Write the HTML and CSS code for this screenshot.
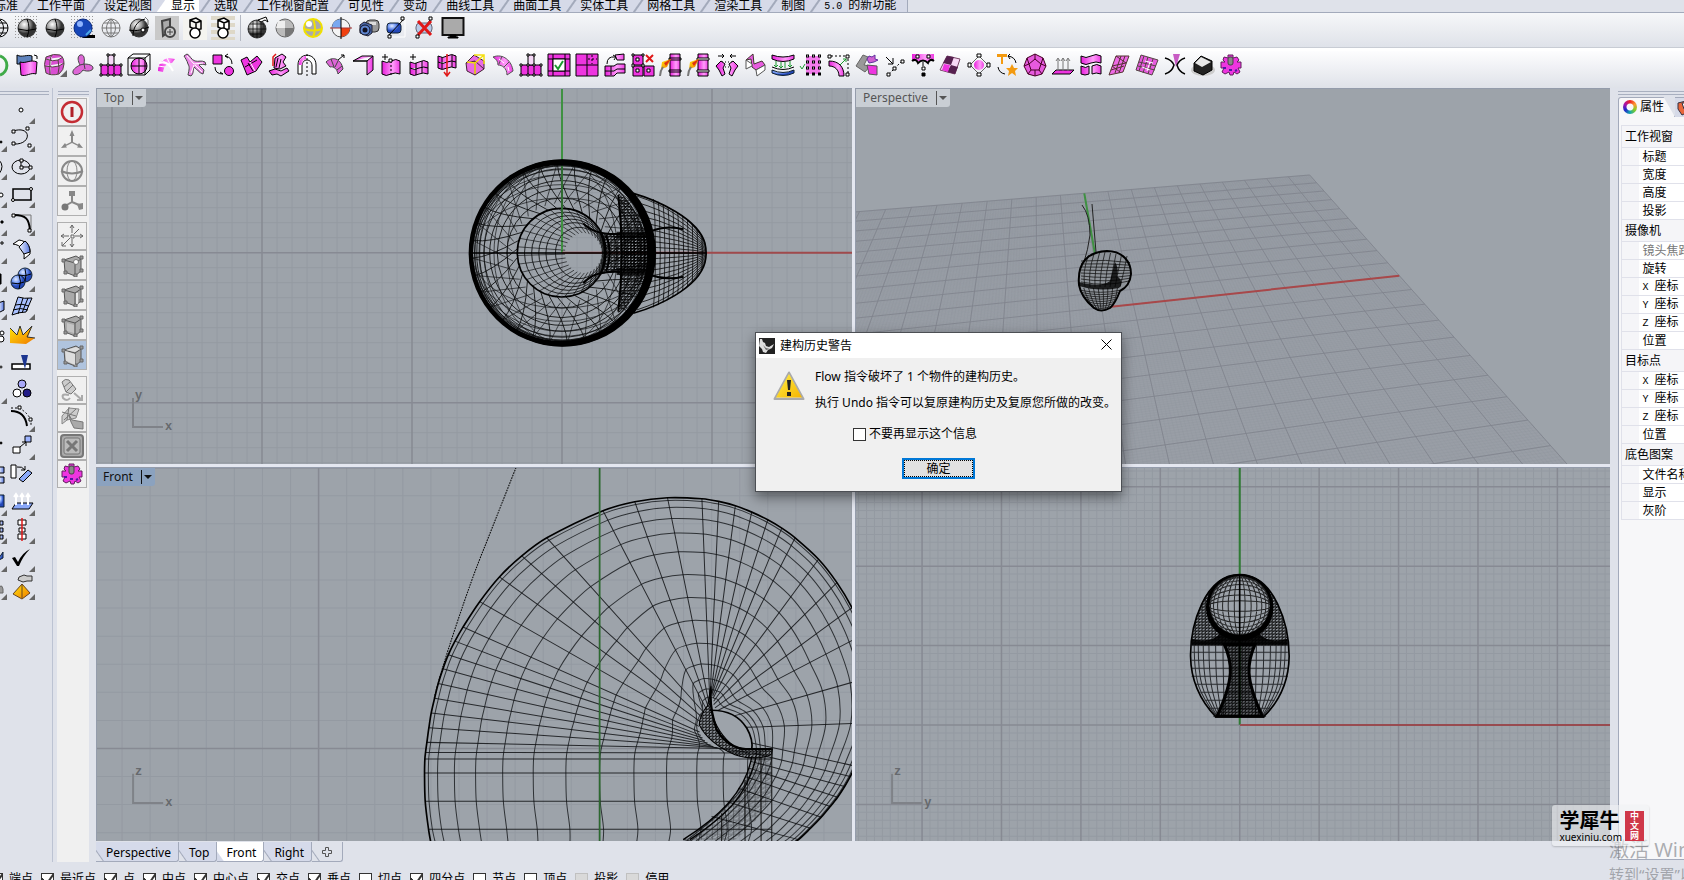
FILE: index.html
```html
<!DOCTYPE html>
<html lang="zh-CN">
<head>
<meta charset="utf-8">
<title>Rhinoceros</title>
<link rel="stylesheet" href="styles.css">
</head>
<body>
<svg class="defs" aria-hidden="true">
  <defs>
    <linearGradient id="pink"><stop offset="0" stop-color="#e81edb"/><stop offset=".6" stop-color="#ff9dfa"/><stop offset="1" stop-color="#ee3ae2"/></linearGradient>
    <radialGradient id="ball" cx=".35" cy=".3"><stop offset="0" stop-color="#fff"/><stop offset=".6" stop-color="#999"/><stop offset="1" stop-color="#333"/></radialGradient>
    <radialGradient id="blue" cx=".35" cy=".3"><stop offset="0" stop-color="#dfeaff"/><stop offset=".6" stop-color="#6a90f0"/><stop offset="1" stop-color="#2448b8"/></radialGradient>
    <linearGradient id="sky"><stop offset="0" stop-color="#f4f8ff"/><stop offset="1" stop-color="#5878e0"/></linearGradient>
    <linearGradient id="gold" x2="1" y2="1"><stop offset="0" stop-color="#ffe60a"/><stop offset="1" stop-color="#f07800"/></linearGradient>
    <linearGradient id="amber" x2="1" y2="1"><stop offset="0" stop-color="#fff04a"/><stop offset="1" stop-color="#f5b400"/></linearGradient>
    <pattern id="dots" width="3" height="3" patternUnits="userSpaceOnUse"><path d="M0 0h1v1h-1z" fill="#999"/></pattern>
    <pattern id="mesh" width="10" height="9" patternUnits="userSpaceOnUse"><path d="M0 2h10M3 0v9M0 9L10 0M7 0v5" stroke="#000" stroke-width="2" fill="none"/></pattern>
    <pattern id="mesh2" width="16" height="14" patternUnits="userSpaceOnUse"><path d="M0 3h16M4 0v14M0 14L16 5" stroke="#000" stroke-width="2" fill="none"/></pattern>
    <clipPath id="tail-clip"><path d="M560 155C620 180 745 235 765 310Q772 339 765 368C745 445 620 500 560 523z"/></clipPath>
  </defs>
</svg>

<nav class="tabs">
  <button class="tab">标准</button><button class="tab">工作平面</button><button class="tab">设定视图</button><button class="tab on">显示</button><button class="tab">选取</button><button class="tab">工作视窗配置</button><button class="tab">可见性</button><button class="tab">变动</button><button class="tab">曲线工具</button><button class="tab">曲面工具</button><button class="tab">实体工具</button><button class="tab">网格工具</button><button class="tab">渲染工具</button><button class="tab">制图</button><button class="tab last"><span class="mono">5.0&nbsp;</span>的新功能</button>
</nav>
<div class="bar bar-display" id="display-bar"></div>
<div class="bar bar-deform" id="deform-bar"></div>

<main class="work">
  <aside class="tools">
    <div class="grip"></div>
    <div class="tool-grid" id="tool-grid"></div>
  </aside>
  <aside class="filters">
    <div class="grip"></div>
    <div class="filter-list" id="filter-list"></div>
  </aside>

  <section class="views">
    <div class="view-grid">
      <div class="view">
        <svg id="view-top" viewBox="97 89 755 376" preserveAspectRatio="xMinYMin slice"></svg>
        <button class="view-name">Top<span class="drop"></span></button>
      </div>
      <div class="view">
        <svg id="view-persp" viewBox="856 89 754 376" preserveAspectRatio="xMinYMin slice"></svg>
        <button class="view-name">Perspective<span class="drop"></span></button>
      </div>
      <div class="view">
        <svg id="view-front" viewBox="97 469 755 372" preserveAspectRatio="xMinYMin slice"></svg>
        <button class="view-name active">Front<span class="drop"></span></button>
      </div>
      <div class="view">
        <svg id="view-right" viewBox="856 469 754 372" preserveAspectRatio="xMinYMin slice"></svg>
      </div>
    </div>
    <nav class="view-tabs">
      <button class="vtab first">Perspective</button><button class="vtab">Top</button><button class="vtab on">Front</button><button class="vtab">Right</button><button class="vtab add" aria-label="+"><svg class="i" width="10" height="10" viewBox="0 0 10 10"><path d="M3.500 .5h3v3h3v3h-3v3h-3v-3h-3v-3h3z" stroke="#555"/></svg></button>
    </nav>
  </section>

  <aside class="props">
    <div class="grip"></div>
    <div class="prop-tabs">
      <button class="ptab"><span class="wheel"></span>属性</button>
      <button class="ptab2"><svg class="i" width="16" height="16" viewBox="0 0 16 16"><path d="M1 3l8-2v12l-4 2-4-6z" fill="#e8663a" stroke="#334"/><path d="M5 3h8v6H7z" fill="#fff" stroke="#334"/></svg></button>
    </div>
    <div class="prop-body">
      <table class="ptable">
        <colgroup><col class="indent"><col></colgroup>
        <tbody>
          <tr class="head"><th colspan="2">工作视窗</th></tr>
          <tr><td></td><td>标题</td></tr>
          <tr><td></td><td>宽度</td></tr>
          <tr><td></td><td>高度</td></tr>
          <tr><td></td><td>投影</td></tr>
          <tr class="head"><th colspan="2">摄像机</th></tr>
          <tr class="off"><td></td><td>镜头焦距</td></tr>
          <tr><td></td><td>旋转</td></tr>
          <tr><td></td><td><span class="mono">X&nbsp;</span>座标</td></tr>
          <tr><td></td><td><span class="mono">Y&nbsp;</span>座标</td></tr>
          <tr><td></td><td><span class="mono">Z&nbsp;</span>座标</td></tr>
          <tr><td></td><td>位置</td></tr>
          <tr class="head"><th colspan="2">目标点</th></tr>
          <tr><td></td><td><span class="mono">X&nbsp;</span>座标</td></tr>
          <tr><td></td><td><span class="mono">Y&nbsp;</span>座标</td></tr>
          <tr><td></td><td><span class="mono">Z&nbsp;</span>座标</td></tr>
          <tr><td></td><td>位置</td></tr>
          <tr class="head"><th colspan="2">底色图案</th></tr>
          <tr><td></td><td>文件名称</td></tr>
          <tr><td></td><td>显示</td></tr>
          <tr><td></td><td>灰阶</td></tr>
        </tbody>
      </table>
    </div>
  </aside>
</main>

<footer class="snaps">
  <label><input type="checkbox" checked>端点</label><label><input type="checkbox" checked>最近点</label><label><input type="checkbox" checked>点</label><label><input type="checkbox" checked>中点</label><label><input type="checkbox" checked>中心点</label><label><input type="checkbox" checked>交点</label><label><input type="checkbox" checked>垂点</label><label><input type="checkbox">切点</label><label><input type="checkbox" checked>四分点</label><label><input type="checkbox">节点</label><label><input type="checkbox">顶点</label><label><input type="checkbox" disabled>投影</label><label><input type="checkbox" disabled>停用</label>
</footer>

<div class="activate"><p class="act-big">激活 Windows</p><p class="act-small">转到“设置”以激活 Windows。</p></div>
<div class="brand"><div><p class="brand-name">学犀牛</p><p class="brand-url">xuexiniu.com</p></div><p class="brand-tag">中文网</p></div>

<div class="dialog" role="dialog" aria-labelledby="dlg-title">
  <header class="dlg-head">
    <svg width="16" height="16" viewBox="0 0 16 16"><path fill="#222" d="M0 0h16v16H0z"/><path fill="#ddd" d="M1 1h2l1 3 2 1 1 3 3 1 5-3-2 4-4 2-2 3-3-1-1-3-3-3z"/><path fill="#666" d="M4 7l3 3 4 1-4 1z"/></svg>
    <h1 id="dlg-title">建构历史警告</h1>
    <button class="dlg-close" aria-label="关闭"><svg width="11" height="11" viewBox="0 0 11 11"><path d="M.5 .5l10 10M10.500 .5l-10 10" stroke="#000" fill="none"/></svg></button>
  </header>
  <div class="dlg-body">
    <svg width="32" height="30" viewBox="0 0 32 30"><path d="M16 1.500L30.500 28h-29z" fill="#d8d8d0" stroke="#aaa" stroke-width="2" stroke-linejoin="round"/><path d="M16 3L29 26.500H3z" fill="url(#amber)"/><path d="M14 9h4l-1 10h-2zM14 21h4v4h-4z" fill="#222"/></svg>
    <div class="dlg-text"><p>Flow 指令破坏了 1 个物件的建构历史。</p><p>执行 Undo 指令可以复原建构历史及复原您所做的改变。</p></div>
  </div>
  <label class="dlg-check"><input type="checkbox">不要再显示这个信息</label>
  <button class="dlg-ok">确定</button>
</div>
<script src="app.js"></script>
</body>
</html>
```
FILE: styles.css
```css
* { box-sizing: border-box; }
body { margin: 0; height: 100vh; overflow: hidden; display: flex; flex-direction: column; position: relative; background: #dfe2ea; color: #000; font: 12px/16px "Noto Sans", "Noto Sans CJK SC", sans-serif; }
button { font: inherit; color: inherit; border: 0; padding: 0; margin: 0; background: none; display: block; }
p, h1 { margin: 0; font-weight: 400; font-size: 12px; }
.defs { position: absolute; width: 0; height: 0; }
.mono { font-family: "Liberation Mono", monospace; font-size: 10px; }

.i { fill: none; stroke: #000; display: block; }
.i .m { fill: url(#pink); }
.i .p { fill: #ee35e0; }
.i .l { fill: #f5d8f6; }
.i .w { fill: #fff; }
.i .k { fill: #000; }
.i .e { fill: #999; stroke: #666; }
.i .g { stroke: #777; }
.i .s { fill: url(#ball); stroke: #333; }
.i .b { fill: url(#blue); stroke: #123; }
.i .y { fill: url(#sky); }
.i .o { fill: url(#gold); }
.i .r { stroke: #e01818; }
.i .n { stroke: none; }
.i .h { stroke: #fff; }
.i .t { stroke-width: 2; }
.i .a { stroke: #1c9a30; }

.tabs { display: flex; flex: none; height: 13px; overflow: hidden; border-bottom: 1px solid #a3aabb; }
.tab { position: relative; flex: none; white-space: nowrap; height: 12px; line-height: 8px; padding: 0 4px 0 15px; background: linear-gradient(125deg, #d6dae8 7px, #a3aabb 8px, #a3aabb 9px, #d6dae8 10px); }
.tab:first-child { margin-left: -21px; }
.tab.on { background: linear-gradient(125deg, #d6dae8 7px, #fff 8px); }
.tab.last { padding-right: 11px; border-right: 1px solid #a3aabb; }
.bar { display: flex; flex: none; align-items: center; background: linear-gradient(#f6f7f9, #dfe2e9); }
.bar-display { height: 35px; padding-bottom: 4px; border-bottom: 1px solid #c8ccd4; }
.bar-deform { height: 40px; padding-bottom: 9px; border-top: 3px solid #fff; background: linear-gradient(#fdfdfe, #dfe2e9); }
.bar button { width: 28px; height: 28px; flex: none; padding: 2px; }
.bar button:first-child { margin-left: -15px; }
.bar .sep { width: 6px; height: 26px; flex: none; background: linear-gradient(#b4b8c2, #b4b8c2) center / 1px 100% no-repeat; }

.work { flex: 1; min-height: 0; display: flex; }
.grip { height: 4px; margin: 3px 0 2px; flex: none; border-top: 1px solid #a9b0c0; border-bottom: 1px solid #a9b0c0; }
.tools { width: 53px; flex: none; border-right: 1px solid #bcc3d2; overflow: hidden; }
.tools .grip { margin-right: 3px; }
.tool-grid { display: grid; grid-template-columns: 28px 28px; grid-auto-rows: 28px; margin-left: -21px; }
.tool { position: relative; }
.tool.fly::after { content: ""; position: absolute; right: 0; bottom: 1px; border: 3px solid; border-color: transparent #666 #666 transparent; }
.filters { width: 43px; flex: none; padding: 0 7px 0 4px; display: flex; flex-direction: column; }
.filters .grip { margin-left: 1px; }
.filter-list { flex: 1; padding-top: 1px; background: #f0f0f0; }
.filter { width: 30px; height: 30px; border: 1px solid #b0b0b0; background: #f0f0f0; display: grid; place-items: center; }
.filter.short { height: 28px; }
.filter.gap { margin-top: 6px; }
.filter.on { background: #b0c4de; }

.views { flex: 1; min-width: 0; display: flex; flex-direction: column; }
.view-grid { flex: 1; min-height: 0; display: grid; grid-template-columns: 756fr 755fr; grid-template-rows: 376fr 374fr; gap: 3px; background: #e4e7f0; }
.view { position: relative; min-width: 0; min-height: 0; background: #9da3aa; border-left: 1px solid #949cab; border-top: 1px solid #949cab; overflow: hidden; }
.view > svg { display: block; width: 100%; height: 100%; position: absolute; }
.view text { font: bold 12px "Liberation Mono", monospace; fill: #66696d; }
.view-name { position: relative; display: flex; align-items: center; height: 18px; padding: 0 3px 1px 7px; gap: 8px; background: #c9ced4; color: #555; border-bottom-right-radius: 3px; }
.view-name.active { background: #8ba2bf; color: #111; padding-left: 6px; }
.drop { display: flex; align-items: center; height: 14px; border-left: 1px solid currentColor; padding-left: 2px; }
.drop::before { content: ""; border: 4px solid transparent; border-top-color: currentColor; border-bottom-width: 0; }
.view-tabs { display: flex; height: 21px; flex: none; padding-top: 1px; }
.vtab { position: relative; height: 20px; padding: 2px 7px 0 10px; background: linear-gradient(55deg, #dfe2ea 5px, #a3aabb 6px, #d5daea 7px); border-right: 1px solid #a3aabb; border-bottom: 1px solid #a3aabb; border-bottom-right-radius: 3px; }
.vtab.on { background: linear-gradient(55deg, #d5daea 5px, #fff 6px); padding-left: 9px; }
.vtab.add { background: linear-gradient(55deg, #dfe2ea 5px, #a3aabb 6px, #dfe2ea 7px); padding: 0 10px; }

.props { width: 74px; flex: none; padding-left: 8px; display: flex; flex-direction: column; overflow: hidden; }
.prop-tabs { display: flex; height: 20px; flex: none; }
.ptab { flex: none; display: flex; align-items: center; gap: 3px; width: 57px; padding: 0 0 1px 4px; border: 1px solid #a3aabb; border-bottom: 0; border-radius: 3px 0 0 0; background: #f7f7f9; clip-path: polygon(0 0, 80% 0, 100% 100%, 0 100%); }
.ptab2 { flex: 1; overflow: hidden; border-top: 1px solid #a3aabb; background: #d6dae8; padding-left: 2px; }
.wheel { flex: none; width: 14px; height: 14px; border-radius: 50%; background: radial-gradient(circle, #f7f7f9 3px, transparent 4px), conic-gradient(#e22, #f93, #8c2, #1aa, #22c, #a1a, #e22); }
.prop-body { flex: 1; margin-bottom: 2px; padding: 8px 0 0 2px; background: #f7f7f9; border-left: 1px solid #a3aabb; border-bottom: 1px solid #a3aabb; overflow: hidden; }
.ptable { width: 120px; border-collapse: collapse; table-layout: fixed; line-height: 14px; white-space: nowrap; border-left: 1px solid #e0e1ea; }
.ptable .indent { width: 17px; }
.ptable td, .ptable th { height: 18px; padding: 0 0 0 4px; border-top: 1px solid #e0e1ea; border-bottom: 1px solid #e0e1ea; text-align: left; font-weight: 400; background: #fff; }
.ptable td:first-child { background: #f5f5f8; }
.ptable th { height: 22px; padding-left: 3px; background: #f5f5f8; }
.ptable .off { color: #777; }

.snaps { flex: none; height: 18px; padding: 10px 0 0; overflow: hidden; display: flex; gap: 8px; }
.snaps label { flex: none; display: flex; gap: 6px; height: 16px; line-height: 14px; white-space: nowrap; }
.snaps label:first-child { margin-left: -10px; }
input[type="checkbox"] { appearance: none; flex: none; width: 13px; height: 13px; margin: 1px 0 0; border: 1px solid #333; background: #fff; }
input[type="checkbox"]:checked { background: linear-gradient(125deg, transparent 8px, #333 9px, #333 10px, transparent 11px), linear-gradient(45deg, #fff 4px, #333 4px, #333 5px, #fff 5px) 0 0 / 5px 100% no-repeat, #fff; }
input[type="checkbox"]:disabled { border-color: #c0c0c0; background: #d9d9d9; }

.activate { position: absolute; left: calc(100% - 75px); bottom: -4px; white-space: nowrap; color: rgba(120, 122, 128, .6); }
.act-big { font-size: 20px; line-height: 28px; }
.act-small { font-size: 15px; line-height: 20px; }
.brand { position: absolute; right: 35px; bottom: 34px; display: flex; gap: 3px; padding: 5px 5px 3px 7px; border-radius: 3px; background: rgba(240, 241, 243, .6); box-shadow: 0 1px 2px rgba(0, 0, 0, .2); }
.brand-name { font-size: 20px; line-height: 22px; font-weight: 700; }
.brand-url { font-size: 10px; line-height: 11px; }
.brand-tag { width: 19px; margin-top: 1px; padding: 0 5px; background: #cf3849; color: #fff; font-size: 9px; line-height: 10px; font-weight: 700; align-self: start; }

.dialog { position: absolute; left: calc(50% - 87px); top: 332px; width: 367px; padding-bottom: 12px; border: 1px solid #4c4f54; background: #f0f0f0; box-shadow: 0 5px 12px rgba(0, 0, 0, .45); }
.dlg-head { display: flex; align-items: center; gap: 5px; height: 25px; padding: 0 9px 0 3px; background: #fff; }
.dlg-head h1 { flex: 1; }
.dlg-body { display: flex; gap: 10px; padding: 11px 12px 0 17px; }
.dlg-body svg { margin-top: 2px; flex: none; }
.dlg-text p { line-height: 16px; margin-bottom: 10px; white-space: nowrap; }
.dlg-check { display: flex; align-items: center; gap: 3px; margin: 5px 0 0 97px; line-height: 16px; }
.dlg-check input { margin: 0; }
.dlg-ok { width: 73px; height: 21px; margin: 16px 0 0 146px; border: 2px solid #0078d7; background: #e1e1e1; outline: 1px dotted #000; outline-offset: -3px; }
```
FILE: app.js
```js
const DISPLAY = [
  '<circle cx="12" cy="12" r="9"/><path d="M3 12h18M12 3v18M12 3c-6 5-6 13 0 18M12 3c6 5 6 13 0 18M5 7h14M5 17h14"/>',
  '<path class="n" d="M0 0h24v24H0z" fill="url(#dots)"/><circle class="s" cx="12" cy="12" r="9"/><path d="M3 13q9 3 18 0M12 3q4 9 0 18"/>',
  '<circle class="s" cx="12" cy="12" r="9"/><path d="M3 13q9 3 18 0M12 3q4 9 0 18"/>',
  '<path class="n" d="M0 0h24v24H0z" fill="url(#dots)"/><path class="k n" d="M8 19h16v3H12z"/><circle cx="12" cy="12" r="9" fill="#1646b8" stroke="#0a2a80"/><circle class="n" cx="9" cy="8" r="3" fill="#8fb4ff"/><path class="t" stroke="#4aa8e8" d="M15 19l5-5"/>',
  '<g class="g"><circle cx="12" cy="12" r="9"/><path d="M3 12h18M12 3v18M12 3c-6 5-6 13 0 18M12 3c6 5 6 13 0 18M5 7h14M5 17h14"/></g>',
  '<circle class="s" cx="12" cy="12" r="9"/><path d="M18 3c-9 2-12 10-12 17M2 14c8 2 14-1 20-3"/><circle class="w" cx="16" cy="14" r="2"/><path class="g" d="M18 1l3 3v5"/>',
  '<path class="n" fill="#c9c9c9" d="M0 0h24v24H0z"/><path class="t" stroke="#444" fill="#aaa" d="M7 5l8-2v12l-7 5zM7 5l1 15"/><circle cx="15" cy="16" r="5" class="t" fill="#ccc" stroke="#444"/><path stroke="#444" d="M12 16h6M15 13v6"/>',
  '<path class="n" fill="#f4f4f0" d="M0 0h24v24H0z"/><path d="M7 4l6-2 5 3v8l-5 1-6-3zM7 4l6 3 5-2M13 7v7" stroke-width="1.500"/><circle class="w" cx="12" cy="17" r="5" stroke-width="1.500"/>',
  '<path class="n" fill="#ded8c8" d="M0 0h24v4H0zM0 7h24v4H0zM0 14h24v4H0zM0 21h24v3H0z"/><path class="w" d="M7 4l6-2 5 3v8l-5 1-6-3zM7 4l6 3 5-2M13 7v7" stroke-width="1.500"/><circle class="w" cx="12" cy="17" r="5" stroke-width="1.500"/>',
  null,
  '<circle class="s" cx="12" cy="13" r="9"/><path d="M3 13h18M12 4v18M5 8h14M5 18h14M8 5v16M16 5v16" opacity=".7"/><path class="w" d="M13 4l8-3 2 5-3-2-4 2z"/>',
  '<circle cx="12" cy="12" r="9" fill="#bbb" stroke="#666"/><path class="n" fill="#eee" d="M5 5h7v7H3z"/><path class="n" fill="#777" d="M12 12h9q-1 8-9 9z"/>',
  '<circle cx="12" cy="12" r="9" fill="#aaa" stroke="#f0e000" stroke-width="2"/><path class="t" stroke="#f0e000" d="M3 13q9 3 18 0M12 3q4 9 0 18"/><circle class="n w" cx="8" cy="8" r="3"/>',
  '<circle cx="12" cy="12" r="9" fill="#f4f4f4" stroke="#555"/><path class="n" fill="#7aa8f0" d="M12 12V3q-9 1-9 9z"/><path class="n" fill="#f04010" d="M12 12h9q-1 8-9 9z"/><path stroke="#a33" d="M1 12h22"/><path d="M12 1v22"/>',
  '<rect x="9" y="4" width="13" height="12" rx="4" fill="#999" stroke="#333"/><path class="n" fill="#ddd" d="M12 6h7v3h-7z"/><path fill="#4a68a8" stroke="#223" d="M3 9l4-3 8 3v8l-4 3-8-3z"/><circle cx="8" cy="14" r="5" fill="#5f86d0" stroke="#112"/><circle class="n" fill="#112" cx="8" cy="14" r="2.500"/>',
  '<path stroke="#fff" d="M5 18L20 3v18H5z"/><rect class="b" x="2" y="7" width="14" height="10" rx="3"/><path d="M4 19L19 3"/><path class="w" d="M16 1h3v3h-3zM3 19h3v3H3z"/>',
  '<rect x="3" y="7" width="16" height="10" rx="4" fill="#b8cbe8" stroke="#667"/><path d="M4 21L18 3"/><path class="r" stroke-width="3" d="M5 5l13 14M18 5L5 19"/><path class="w" d="M16 1h3v3h-3zM3 19h3v3H3z"/>',
  '<rect x="1.500" y="2" width="21" height="17" fill="#aaa" stroke="#111" stroke-width="2"/><path class="k" d="M9 19h6v2h2v1H7v-1h2z"/>'
];
const STRIP = '<path class="p" d="M2 12h20v10H2zM9 12v10M15 12v10"/><path class="l" d="M9 2h6v10H9z"/><path class="w" d="M8 1h2v2H8zM14 1h2v2h-2zM1 11h2v2H1zM8 11h2v2H8zM14 11h2v2h-2zM21 11h2v2h-2zM1 21h2v2H1zM8 21h2v2H8zM14 21h2v2h-2zM21 21h2v2h-2z"/>';
const GEAR = '<path class="p" d="M4 7l1-3 4 1V2h5v3l4-1 2 3-2 2h4v6h-3l2 4-3 2-3-2-1 3h-3l-1-3-4 2-3-2 2-4H2V9h4z" stroke="#60205c"/><rect x="9" y="4" width="5" height="8" rx="2" fill="#888" stroke="#444"/><path stroke="#5018a0" class="t" d="M4 15h3M16 18l2-1M10 17h3"/>';
const PIPE = t => `<path class="m" d="M11 1h10v22H11z"/><path ${t ? '' : 'class="w"'} d="M10 5h12v2H10zM10 17h12v2H10z"/><path class="n o" d="M12 6L3 9l-1 7 6-2z"/><path class="n" fill="#e03010" d="M12 6l-7 4 2 3z"/><path class="t g" d="M4 14q-3 4-3 9"/>`;
const DEFORM = [
  '<path d="M13 3a10 10 0 0 1 0 19" stroke="#3faa48" stroke-width="3"/>',
  '<path fill="#5f83bd" d="M2 2c5 3 10-1 15 1v8H2z"/><path class="m" d="M5 9c6 2 10-3 17 0l-1 12c-5-2-10 3-15 1z"/><path d="M19 2l3 1v3"/>',
  '<path fill="#d94fd2" stroke="#544" d="M3 4q8-4 14-2 4 2 4 9 0 6-5 10-8 2-13-1-3-9 0-16zM3 6q7 3 12 1l5-3M15 7q2 8 0 14M2 13q8 2 14 0l5-3M9 2q-3 3-2 20"/><path class="n" fill="#666" d="M24 17v7h-7z"/>',
  '<path fill="#dd66d6" stroke="#444" d="M9 2c4-1 5 3 4 9 4 0 9 1 9 4s-6 4-10 2c-3 5-9 6-10 3s3-6 7-8c-2-4-3-8 0-10zM9 12l4-1 1 5"/>',
  STRIP,
  '<circle class="m" cx="12" cy="13" r="8"/><path d="M1 5l5-4h17v16l-5 5H1zM1 5h17v17M18 5l5-4M4 13h16M12 5v16"/>',
  '<path class="m n" d="M3 18c0-7 4-12 11-13l6 1-3 4c-5 0-8 3-9 9z"/><path class="h" d="M3 13l7 1M7 7l5 4M12 5l3 6"/><path class="h t" d="M4 10q9-3 14 8"/>',
  '<path fill="#ee8ae8" stroke="#444" d="M1 3l3-2c3 1 4 6 8 7s6-1 10 1l1 3c-3-1-5-1-7 0l5 5-1 4c-4-1-6-5-9-7-1 3 0 6-3 9l-3-1c1-5 2-8 0-11-1-4-3-6-4-8z"/><path class="h" d="M4 3l7 8 9-1M11 12l-3 8M12 12l7 7"/>',
  '<path class="p" d="M2 2h9v9H2z"/><circle class="p" cx="18" cy="18" r="4.500"/><path d="M14 3q7 1 7 8M4 14q0 7 8 7M14 3l3-2M14 3l3 2M12 21l-3-2"/>',
  '<path class="p" d="M2 7l6-3 3 5 7-6 5 6-6 9-9 4zM6 14l12-7M9 10l5 8"/><path class="h" d="M11 9l5 9"/>',
  '<path class="m" d="M8 5l7-4 4 3-3 5 3 4-6 3-6-1zM2 18l6-2 6 2 6-3 2 3-8 5-4-2-5 1zM11 5l-2 9M14 6l-2 9"/><path class="r" stroke-width="1.500" d="M6 13V4l3-3"/>',
  '<path class="w" d="M3 21V12c0-13 18-13 18 0v9h-4v-8c0-8-10-8-10 0v8z"/><path class="m n" d="M4 12c0-6 4-9 7-9v3c-3 1-4 3-4 6z"/><path stroke-dasharray="2" d="M12 1v22"/>',
  '<path fill="#dd66d6" stroke="#444" d="M3 9c6-6 15-4 17 7l-5 5c-1-5-4-8-8-7zM8 6l3 8M15 8l-3 6M19 13l-5 4"/><path d="M15 7l6-5M18 2h3v3"/>',
  '<path class="m" d="M2 8l9-5h11v14l-6 5V8zM2 8h14l6-5"/>',
  '<path class="m" d="M3 8q5 3 9 0 5-3 9 0v13q-5-2-9 0-5 3-9 0z"/><path stroke-dasharray="2" d="M12 8v14"/><path d="M6 1v6M3 4h6"/><path class="w" d="M10 6h3v3h-3z"/>',
  '<path class="m" d="M3 9q5 3 9 0 5-3 9 0v12q-5-2-9 0-5 3-9 0zM3 15q5 3 9 0 5-2 9 0M9 10v12M15 8v12"/><path d="M6 1v6M3 4h6"/>',
  '<path class="m" d="M3 3q5 3 9 0 5-3 9 0v12q-5-2-9 0-5 3-9 0zM3 9q5 3 9 0 5-2 9 0M7 4v12M17 2v12"/><path class="r" stroke-width="1.500" d="M12 1v21M9 19l3 4 3-4"/>',
  '<path fill="#e86ae4" stroke="#423" d="M3 10l8-8 10 6v8l-9 6-8-4zM3 10l9-2 9 8M12 8v14"/><path stroke="#f5e010" stroke-width="1.500" d="M11 2h10v9M4 9l8 1 9-8M12 10v11"/>',
  '<path class="m" stroke="#555" d="M2 4c10-4 19 4 20 14l-6 4c0-7-5-10-9-10 0-4-2-6-5-8zM11 3l-3 8M18 9l-5 5"/><path class="h" d="M8 6l5 4M17 14l1 4"/>',
  STRIP,
  '<path class="p" d="M1 1h22v22H1zM1 6h22M1 18h22M6 1v22M18 1v22"/><path class="w" d="M6 6h12v12H6z"/><path class="a t" d="M8 12l3 4 5-8"/>',
  '<path class="p" d="M1 1h22v22H1zM1 12h22M12 1v22"/><path stroke-dasharray="2" d="M17 2v9M13 6h9"/>',
  '<path class="m" d="M2 13h9l3-2h8v9h-8l-3 3H2zM2 18h9l3-2h8M8 13v9M12 2l9-1v6h-7z"/><path d="M4 11q0-8 8-7M10 2l3 2-2 3"/>',
  '<path class="p" d="M2 2h10v10H2zM2 13h10v10H2zM13 13h10v10H13z"/><path class="w" d="M5 5h3v3H5zM5 16h3v3H5zM16 16h3v3h-3zM1 1h2v2H1zM11 1h2v2h-2zM1 11h2v3H1zM11 11h2v3h-2z"/><path class="r t" d="M15 2l7 7M22 2l-7 7"/>',
  PIPE(1), PIPE(0),
  '<path d="M3 3h6M15 3h6M7 1l2 2-2 2M17 1l-2 2 2 2"/><path stroke-dasharray="1 2" d="M7 9h10M7 14h10"/><path class="m" d="M1 13l5-5 4 3-2 4 2 6-3 2-3-6zM23 13l-5-5-4 3 2 4-2 6 3 2 3-6z"/>',
  '<path fill="#e85ce0" stroke="#433" d="M3 7l7-6 1 10 8-3 3 4-9 5-4-3-1-8z"/><path class="w" stroke="#555" d="M13 17l9-5v5l-8 6zM3 7v9l6-3v-2z"/>',
  '<path class="m" d="M1 2q11 4 22 0v4q-11 5-22 0z"/><path class="b" d="M1 17q11 5 22 0v3q-11 5-22 0z"/><path d="M1 14q11 5 22 0"/><path class="a" d="M5 8v6M10 9v6M14 9v6M19 8v6M3 12l2 2 2-2M8 13l2 2 2-2M17 12l2 2 2-2"/>',
  '<path class="n" fill="#f37cec" d="M7 3h14v18H7z"/><path stroke-width="3" stroke-dasharray="3" d="M7 3h16M7 9h16M7 15h16M7 21h16"/><path class="h" stroke-dasharray="1 5" d="M8 3h16M8 9h16M8 15h16"/><path class="a" d="M1 13l2 3 3-5"/>',
  '<path stroke-dasharray="2" d="M4 3h17v18"/><path class="m" d="M2 8c10 0 15 6 15 15h-5c0-6-4-10-10-10z"/><path class="w" d="M1 2h3v3H1zM19 2h3v3h-3zM19 20h3v3h-3z"/><path class="a" d="M13 12l6-6M16 6h3v3"/>',
  '<path class="e" d="M1 13L8 2l5 2-4 8 6 1-5 6z"/><path class="p" stroke="#555" d="M12 12l10 1v9l-8-1z"/><path stroke="#6030a0" fill="#d060d0" d="M14 3l3 1 3-2v4l3 1-4 2-5 1-2-4z"/>',
  '<path d="M3 4l7 7M10 5v6H5"/><path stroke-dasharray="2" d="M6 21L19 8"/><path class="w" d="M4 20h3v3H4zM10 14h3v3h-3zM18 7h3v3h-3z"/>',
  '<path class="m n" d="M1 1h22v7H1z"/><path class="t" d="M1 8q4-3 6 2 5-5 10 0 2-5 6-2"/><path class="w" d="M5 2h3v3H5zM16 2h3v3h-3zM11 14h3v3h-3z"/><path class="k" d="M11 20h3v3h-3zM12 9v4"/>',
  '<path stroke="#746" fill="#f8d8f6" d="M8 3l13 3-5 15L1 17z"/><path class="n" fill="#56204f" d="M8 3l7 1-3 8-8-2zM12 12l7 2-3 7-8-2z"/><path class="p n" d="M5 11l6 1-2 7-6-2z"/>',
  '<path d="M12 3l9 9-9 9-9-9z" stroke="#666"/><circle class="m n" cx="12" cy="12" r="5"/><path class="w" d="M10 1h4v3h-4zM10 20h4v3h-4zM1 10h3v4H1zM20 10h3v4h-3z"/>',
  '<path class="n" fill="#f39a10" d="M2 1h10v3H8v7H6V4H2z"/><path class="n" fill="#f39a10" d="M17 11l2 4h4l-3 3 1 5-4-3-4 3 1-5-3-3h4z"/><path d="M13 3q7 1 8 7M3 14q1 6 7 7M15 1l-2 2 2 3"/>',
  '<path fill="#e65ade" stroke="#402" d="M12 1l8 4 3 8-4 8-7 2-7-2-4-8 3-8z"/><path stroke="#402" d="M12 6l6 5-2 6H8l-2-6zM12 1v5M20 5l-2 6M23 13l-5-2M19 21l-3-4M12 23v-6M5 21l3-4M1 13l5-2M4 5l2 6"/>',
  '<path class="p" d="M1 21l4-4h18l-4 4z"/><path stroke="#777" d="M7 18V6M12 18V5M17 18V6M5 8l2-3 2 3M10 8l2-3 2 3M15 8l2-3 2 3"/>',
  '<path class="m" d="M2 3q5 3 10 0 5-3 10 0v7q-5-2-10 0-5 3-10 0zM2 13q5 3 8 0v8q-4 2-8 0zM13 13q5-3 9 0v8q-5-2-9 0z"/>',
  '<path fill="#ee6ae6" stroke="#533" d="M9 3h13l-6 16-14 3zM5 13l14-3M4 17l13-4M14 3L8 20M18 3l-6 17M9 3l10 7M5 13l8 6"/>',
  '<path fill="#e65ade" stroke="#544" d="M6 2l17 5-6 15L1 17zM4 9l17 4M13 4L8 20M9 3L4 18M18 6l-5 15M3 13l17 4"/><path class="h" d="M10 8l8 2M7 14l8 3M15 9l-3 9"/>',
  '<path class="n" fill="#c85cc4" d="M10 1h7l-4 13z"/><path stroke-width="1.500" d="M2 5q7 2 9 7-2 7-9 9M22 5q-6 2-8 7 2 7 8 9"/>',
  '<ellipse class="n" cx="12" cy="17" rx="12" ry="6" fill="#ccc"/><path d="M3 10l7-7 11 5v9l-9 5-9-4z" fill="#222"/><path class="n" fill="#e8e8e8" d="M4 10l6-6 10 5-9 5z"/>',
  GEAR
];
const TOOLS = [
  ['', '<circle class="w" cx="14" cy="13" r="2"/>', 0, 1],
  ['<circle class="k" cx="22" cy="17" r="1"/>', '<path d="M6 6C25 0 25 20 7 19"/><path class="w" d="M5 5h3v3H5zM19 2h3v3h-3zM5 17h3v3H5zM21 19h3v3h-3z"/>', 1, 1],
  ['<path d="M20 7q6 6 0 14"/>', '<ellipse cx="14" cy="14" rx="9" ry="7"/><path d="M14 14h9M14 14V7"/><path class="w" d="M13 6h3v3h-3zM13 13h3v3h-3zM22 13h3v3h-3z"/>', 1, 1],
  ['<circle class="w" cx="22" cy="14" r="2"/>', '<path stroke-width="1.500" d="M6 8h18v11H6z"/><circle class="w" cx="24" cy="8" r="1.500"/><circle class="w" cx="6" cy="19" r="1.500"/>', 1, 1],
  ['<path class="k" d="M22 12h2v2h-2z"/>', '<path class="g" d="M7 6h17v15"/><path class="t" d="M7 6c12 0 15 4 16 15"/><path class="w" d="M5 5h3v3H5zM21 20h3v3h-3z"/>', 1, 1],
  ['<path class="w" d="M22 5h2v2h-2z"/>', '<path class="w" d="M6 7l6-4c8 1 12 7 11 14l-6 5c1-9-3-14-11-15z"/><path class="y" d="M12 10l6-6c3 2 5 6 5 11l-6 2z"/>', 1, 1],
  ['<path class="k" d="M20 9h2v10h-2z"/>', '<circle class="b" cx="18" cy="10" r="7"/><circle class="b" cx="11" cy="17" r="7"/><path d="M5 18q6 2 12-1M12 10q3 6 0 14M12 10q6 2 12-1M18 4q2 6 0 12"/>', 1, 1],
  ['<path class="y" d="M19 10l6-2v9l-6 3z"/>', '<path fill="#a8c0ff" d="M11 4q6 2 14 1l-6 14q-7 0-14 3zM8 12q7-2 14 1M6 17q7-3 15 0M16 5l-5 16M21 5l-6 15"/>', 1, 1],
  ['<circle class="w" cx="23" cy="12" r="2"/><circle class="w" cx="22" cy="18" r="3"/>', '<path class="n o" d="M3 22V7l7 7 3-9 3 9 9-9-4 11 7 1-9 6z"/><path stroke="#333" d="M3 7l7 7 3-9 3 9 9-9-5 11 8 1"/>', 0, 0],
  ['<circle class="w" cx="22" cy="18" r="1"/>', '<path class="w" stroke-width="1.500" d="M5 15h18v5H5z"/><path class="n" fill="#1b3590" d="M14 6h7l-3 14z"/>', 0, 0],
  ['', '<circle cx="15" cy="7" r="4" fill="#a8a8f8"/><circle class="w" cx="10" cy="16" r="4"/><circle cx="20" cy="16" r="4" fill="#221c88"/>', 1, 0],
  ['', '<path class="t" d="M4 6q14 0 16 15"/><path stroke-dasharray="2" d="M4 3h8q8 4 12 12v6"/><path class="w" d="M11 1h3v3h-3zM22 13h3v3h-3z"/>', 0, 1],
  ['<circle class="k" cx="22" cy="10" r="1"/>', '<path class="w" d="M6 14h7v6H6z"/><path fill="#9db4ff" d="M18 3h6v6h-6z"/><path d="M13 14l6-5M15 9h4v4"/>', 0, 1],
  ['<path class="y" d="M20 6h5v6h-5zM20 16h5v6h-5z"/>', '<path class="w" d="M4 4h5v13H4z"/><path fill="#8aa8f8" d="M12 18l9-9 4 3-9 9z"/><path d="M10 6q5-1 8 3M18 5v4h-4"/>', 0, 0],
  ['<path class="b" d="M19 6h6v12h-6z"/>', '<path fill="#8aa8f8" d="M5 20l4-6h17l-4 6z"/><path class="h t" d="M9 16V5M15 16V5M21 16V5M7 8l2-3 2 3M13 8l2-3 2 3M19 8l2-3 2 3"/>', 1, 1],
  ['<path class="y" d="M21 4h3v4h-3zM21 11h3v4h-3zM21 18h3v4h-3z"/>', '<path class="w" d="M11 3h8v5h-8zM12 11h6v4h-6zM11 17h8v5h-8z"/><path class="r" stroke-width="1.500" d="M15 1v23"/>', 1, 1],
  ['<path class="b" d="M18 16l6-9v6z"/>', '<path class="k n" d="M5 13l3-1 3 5q4-9 12-13-7 7-11 17h-2z"/>', 1, 1],
  ['<path class="e" d="M18 20q4-12 6-4v4z"/>', '<path d="M6 21l9-10 8 9-8 6z" class="o" stroke="#642"/><path stroke="#642" d="M15 11v14"/><path fill="#ccc" d="M12 4l5-2 3 1h5v5h-5l-4 1-5-2z" stroke="#333"/>', 1, 1]
];
const CUBE = x => `<path d="M4 7l12-4 5 3v12l-6 5-10-4z" fill="#aaa" stroke="#555"/><path d="M4 7l11 3 6-4M15 10v13" stroke="#555"/><path class="e" d="M2 6h3v3H2zM20 3h3v3h-3zM14 21h3v3h-3zM4 18h3v3H4zM20 16h3v3h-3z"/>${x}`;
const FILTERS = [
  ['<circle cx="12" cy="12" r="10" stroke="#c42c33" stroke-width="2.500"/><path stroke="#b02028" stroke-width="3" d="M12 7v10"/>', 'short'],
  ['<path class="n" fill="#888" d="M11 13V7H9.500L12 1l2.500 6H13v6l5 2.500 1-1.500 4 5-6-.5 1-1.500-6-3-6 3 1 1.500-6 .5 4-5 1 1.500z"/>', ''],
  ['<g stroke="#888"><circle cx="12" cy="12" r="10" class="t"/><ellipse cx="12" cy="12" rx="5" ry="10"/><path class="t" d="M1 12q11 5 22 0"/></g>', ''],
  ['<path class="n" fill="#888" d="M9 2h6v5H9z"/><path stroke="#888" class="t" d="M12 7v6l-7 4M12 13l7 3"/><circle class="n" fill="#777" cx="5" cy="18" r="3.500"/><path class="n" fill="#888" d="M17 15l6-1v6l-4 1z"/>', ''],
  ['<path stroke="#666" d="M12 1v8M10 4l2-3 2 3M1 12h8M4 10l-3 2 3 2M15 12h8M20 10l3 2-3 2M12 15v8M10 20l2 3 2-3M10 14l-8 8M2 18v4h4M14 10l5-5M11 11h3v3h-3z"/>', 'short gap'],
  [CUBE('<circle class="w" cx="16" cy="9" r="2.500" stroke="#777"/>'), ''],
  [CUBE('<path stroke="#fff" stroke-width="1.500" d="M17 10v11"/>'), ''],
  [CUBE('<path class="n" fill="#c4c4c4" d="M7 10l7 2v8l-7-2z"/>'), ''],
  [CUBE('<path class="n" fill="#ddd" d="M5 8l10 3v11l-9-4zM6 7l10-3 4 2-5 3z"/>'), 'on'],
  ['<path d="M2 4q3-4 7-2l7 9-5 5-5-2z" fill="#ccc" stroke="#777"/><path stroke="#777" d="M6 14l7-7M4 9l6-5"/><path stroke="#aaa" class="t" d="M9 17q-8-2-6 3 4 4 7 0M14 15l8 7M22 17v5h-5"/>', 'short gap'],
  ['<path fill="#ccc" stroke="#888" d="M2 10l7-8 10 1-3 9-9 2-5 4z"/><path stroke="#777" d="M2 6l14 4M9 1l-2 13M4 14L16 3"/><path d="M9 9l3 5 11 2v7l-9-1-3-6z" fill="#aaa" stroke="#777"/>', 'short'],
  ['<rect x="1" y="1" width="22" height="22" rx="3" fill="#aaa" stroke="#777" class="t"/><rect x="4" y="4" width="16" height="16" rx="2" fill="#bbb" stroke="#777"/><path stroke="#777" stroke-width="3" d="M7 7l10 10M17 7L7 17"/>', 'short'],
  [GEAR, 'short']
];

const icon = (d, n) => `<svg class="i" width="${n}" height="${n}" viewBox="0 0 ${n} ${n}">${d}</svg>`;
const put = (id, html) => { document.getElementById(id).innerHTML = html; };
const barHtml = list => list.map(d => d === null ? '<span class="sep"></span>' : `<button>${icon(d, 24)}</button>`).join('');
put('display-bar', barHtml(DISPLAY));
put('deform-bar', barHtml(DEFORM));
put('tool-grid', TOOLS.map(([a, b, fa, fb]) =>
  `<button class="tool${fa ? ' fly' : ''}">${icon(a, 28)}</button><button class="tool${fb ? ' fly' : ''}">${icon(b, 28)}</button>`).join(''));
put('filter-list', FILTERS.map(([d, c]) => `<button class="filter ${c}">${icon(d, 24)}</button>`).join(''));

/* ---- viewport geometry ---- */
const r1 = n => Math.round(n * 10) / 10;
const path = (d, stroke = '#000', w = 1, extra = '') => `<path d="${d}" fill="none" stroke="${stroke}" stroke-width="${w}" ${extra}/>`;
const line = (x1, y1, x2, y2) => `M${r1(x1)} ${r1(y1)}L${r1(x2)} ${r1(y2)}`;
const mix = (a, b, s) => [a[0] + (b[0] - a[0]) * s, a[1] + (b[1] - a[1]) * s];
const dist = (a, b) => Math.hypot(a[0] - b[0], a[1] - b[1]) || 1;

/* spline through the points, tangents weighted by chord length */
function smooth(pts) {
  const tan = pts.map((p, i) => {
    const a = pts[Math.max(i - 1, 0)], b = pts[Math.min(i + 1, pts.length - 1)];
    const l = dist(a, p) * (a !== p) + dist(p, b) * (b !== p);
    return [(b[0] - a[0]) / l, (b[1] - a[1]) / l];
  });
  let d = `M${r1(pts[0][0])} ${r1(pts[0][1])}`;
  for (let i = 0; i < pts.length - 1; i++) {
    const a = pts[i], b = pts[i + 1], l = dist(a, b) / 3;
    d += `C${r1(a[0] + tan[i][0] * l)} ${r1(a[1] + tan[i][1] * l)} ${r1(b[0] - tan[i + 1][0] * l)} ${r1(b[1] - tan[i + 1][1] * l)} ${r1(b[0])} ${r1(b[1])}`;
  }
  return d;
}
function grid(x0, y0, x1, y1, ox, oy, step) {
  let minor = '', major = '';
  for (let k = Math.ceil((x0 - ox) / step); ox + k * step < x1; k++) {
    const d = line(ox + k * step, y0, ox + k * step, y1);
    if (k % 10) minor += d; else major += d;
  }
  for (let k = Math.ceil((y0 - oy) / step); oy + k * step < y1; k++) {
    const d = line(x0, oy + k * step, x1, oy + k * step);
    if (k % 10) minor += d; else major += d;
  }
  return path(minor, '#949aa2') + path(major, '#878a93', 1.5);
}
const axes = (x, y, v, h) => path(`M${x} ${y - 29}V${y}H${x + 30}`, '#7f8288', 2) + `<text x="${x + 2}" y="${y - 28}">${v}</text><text x="${x + 32}" y="${y + 3}">${h}</text>`;
const ell = (cx, cy, rx, ry) => `M${r1(cx - rx)} ${r1(cy)}a${r1(rx)} ${r1(ry)} 0 1 0 ${r1(2 * rx)} 0a${r1(rx)} ${r1(ry)} 0 1 0 ${r1(-2 * rx)} 0`;

function topView() {
  let s = grid(97, 88, 856, 468, 562, 252.7, 15) + path('M562 88V253', '#3f9142', 2) + path('M562 252.700H856', '#a04a4c', 2) + axes(133, 427, 'y', 'x');
  let d = '', e = '';
  [.03, .06, .1, .15, .21, .3, .42, .58, .78].forEach(t => { d += ell(337 - 2 * t, 339, 278 - 145 * t, 278 - 145 * t); });
  for (let a = 8; a < 360; a += 11.25) {
    const t = a * Math.PI / 180, u = t + .35, w = t - .3;
    d += `M${r1(337 + 270 * Math.cos(t))} ${r1(339 + 270 * Math.sin(t))}Q${r1(337 + 220 * Math.cos(t))} ${r1(339 + 220 * Math.sin(t))} ${r1(335 + 133 * Math.cos(u))} ${r1(339 + 133 * Math.sin(u))}`;
    e += line(337 + 270 * Math.cos(t), 339 + 270 * Math.sin(t), 337 + 150 * Math.cos(w), 339 + 150 * Math.sin(w));
    e += line(335 + 133 * Math.cos(t), 339 + 133 * Math.sin(t), 400 + 55 * Math.cos(t), 339 + 60 * Math.sin(t));
  }
  [.15, .3, .45, .6, .8].forEach(t => { d += ell(335 + 65 * t, 339, 133 - 78 * t, 133 - 70 * t); });
  [262, 250, 235, 205, 165].forEach(x => { e += ell(337, 339, x, 272) + ell(337, 339, 272, x); });
  let tail = '';
  for (let k = 0; k < 12; k++) tail += `M${608 + 14 * k} 140Q${626 + 14 * k} 339 ${608 + 14 * k} 540`;
  for (let k = -10; k <= 10; k++) tail += `M560 ${339 + k * 19}Q700 ${339 + k * 14} 768 ${339 + k * 3}`;
  const lens = 'M505 160Q525 339 505 520Q570 475 600 339Q570 200 505 160z';
  const neck = 'M450 275Q480 290 600 285V395Q480 390 450 405Q480 339 450 275z';
  s += `<g transform="translate(450 140) scale(.3333)">${path(d, '#08090a', 3, 'opacity=".85"')}${path(e, '#101214', 3, 'opacity=".68"')}${path(tail, '#080808', 3, 'opacity=".8" clip-path="url(#tail-clip)"')}
    <path d="${lens}" fill="url(#mesh)"/><path d="${neck}" fill="url(#mesh)"/>
    <path d="M500 275h104v20H500zM500 385h104v20H500z" opacity=".8"/>
    ${path('M400 250Q430 285 510 282M400 430Q430 392 510 396M600 275Q650 255 700 268M600 405Q650 422 700 410', '#000', 6)}
    ${path(ell(335, 338, 133, 133), '#000', 5)}
    <path fill-rule="evenodd" d="${ell(337, 339, 281, 281)}z${ell(331, 339, 262, 264)}z"/>
    ${path('M550 160C620 180 745 235 765 310Q772 339 765 368C745 445 620 500 550 520', '#000', 5)}
    ${path('M505 165Q525 339 505 515M450 275Q480 339 450 405M468 285Q490 339 468 395', '#000', 6)}${path('M60 339H768', '#000', 5)}</g>`;
  s += path('M562 166V215', '#2e6b30', 2) + path('M562 218V250', '#3f9142', 2, 'stroke-dasharray="4 2"');
  put('view-top', s);
}

/* ground plane projected into the perspective view, u and v run -1..1 */
const ground = (u, v) => { const w = .0726 * u + .3492 * v + 1; return [(399.2 * u + 361.2 * v + 1101.7) / w, (-12 * u - 46.9 * v + 307.7) / w]; };
function perspView() {
  const seg = (a, b, c, d) => line(...ground(a, b), ...ground(c, d));
  let major = '', minor = '';
  for (let k = -10; k <= 10; k++) { major += seg(k / 10, -1, k / 10, 1) + seg(-1, k / 10, 1, k / 10); }
  for (let k = -100; k <= 100; k++) { minor += seg(k / 100, -1, k / 100, 1) + seg(-1, k / 100, 1, k / 100); }
  const quad = [ground(-1, -1), ground(1, -1), ground(1, 1), ground(-1, 1)].map(p => p.map(r1).join(' ')).join('L');
  let m = '';
  for (let k = 1; k < 9; k++) {
    m += `M${r1(1083 + k * 5.5)} ${252 + Math.abs(k - 4)}Q${r1(1076 + k * 6)} 272 ${r1(1080 + k * 5)} 287M${1081} ${258 + k * 3}Q1106 ${255 + k * 4} 1130 ${260 + k * 2.6}`;
    m += `M${r1(1079 + k * 4.8)} 288Q${r1(1084 + k * 4)} 302 ${r1(1093 + k * 2)} 309M${r1(1079 + k * 1.5)} ${r1(288 + k * 2.3)}Q1101 ${r1(292 + k * 2.3)} ${r1(1121 - k * 1.3)} ${r1(288 + k * 2.3)}`;
  }
  put('view-persp', `<path d="M${quad}z" fill="#959ba3" opacity=".55"/>` + path(minor, '#868b94', 1, 'opacity=".13"') + path(major, '#80848d', 1, 'opacity=".85"')
    + path(line(...ground(0, 0), ...ground(1, 0)), '#a8484a', 2) + path(line(1084.3, 193.3, 1095, 254), '#3f9142', 2)
    + path('M1082 205Q1090 215 1090 235Q1088 250 1084 262M1092 204L1096 252', '#222')
    + '<path d="M1107 251C1123 251 1131 262 1131 274Q1130 286 1120 291Q1115 304 1110 308Q1101 313 1094 308Q1081 297 1079 285C1077 262 1088 252 1107 251z" fill="#8d9298"/>'
    + path(m, '#111', 1, 'opacity=".75"')
    + path('M1107 251C1123 251 1131 262 1131 274Q1130 286 1120 291Q1115 304 1110 308Q1101 313 1094 308Q1081 297 1079 285C1077 262 1088 252 1107 251z', '#000', 2)
    + '<path d="M1079 282Q1100 288 1110 281Q1113 270 1115 262Q1119 268 1117 276Q1125 282 1119 288Q1098 292 1079 286z" opacity=".8"/>');
}

function frontView() {
  const rays = [
    [83, 1108, 1110, 1108], [73, 1024, 1110, 1024], [71, 940, 1110, 940], [72, 898, 1110, 898], [74, 878, 1080, 880], [78, 848, 960, 866], [84, 804, 945, 863], [91, 760, 935, 860], [101, 716, 927, 856], [112, 672, 918, 850], [126, 628, 910, 843], [142, 586, 903, 835], [162, 545, 898, 827], [186, 503, 894, 817], [236, 427, 892, 800], [295, 353, 895, 785], [362, 290, 900, 772], [437, 236, 908, 760], [605, 155, 915, 750], [700, 128, 920, 742], [798, 116, 923, 735], [901, 119, 924, 710], [951, 127, 926, 700], [1001, 140, 928, 700], [1050, 159, 930, 702], [1098, 182, 931, 705], [1140, 207, 933, 710], [1180, 236, 935, 715], [1250, 300, 936, 725], [1305, 370, 936, 735], [1350, 445, 940, 745], [1385, 525, 950, 752], [1415, 650, 1000, 768], [1410, 789, 1035, 803], [1360, 919, 1050, 850], [1345, 950, 1052, 880], [1328, 980, 1048, 905], [1307, 1012, 1042, 925], [1285, 1040, 1030, 950], [1258, 1072, 1010, 985], [1226, 1105, 975, 1025], [1190, 1139, 930, 1070], [1120, 1190, 845, 1139]
  ];
  const left = [.011, .0375, .086, .147, .225, .313, .407, .504, .603, .697, .784, .86, .93];
  const top = [.013, .047, .1, .17, .26, .37, .48, .59, .7, .8, .87, .92, .96];
  let rad = '', arcs = '';
  rays.forEach(r => { rad += line(...r); });
  left.forEach((s, j) => {
    arcs += smooth([[95 + s * 1010, 1160]].concat(rays.map((r, i) => {
      const w = Math.min(1, Math.max(0, (i - 5) / 13));
      const k = s * 1039 / (r[2] - r[0]);
      const end = i > 18 && i < 31 ? [r[2], Math.max(r[3], 738)] : [r[2], r[3]];
      return mix([r[0], r[1]], end, Math.min(.99, i < 18 ? k + (top[j] - k) * w : top[j]));
    })));
  });
  const outer = smooth([[92, 1160]].concat(rays.map(r => [r[0], r[1]])));
  const sliver = 'M928 680Q925 720 930 755Q945 820 1000 862Q1050 872 1112 868L1108 885Q1060 905 1000 885Q920 850 893 795Q895 765 918 738z';
  put('view-front', grid(97, 468, 856, 844, 598, 748.7, 28) + axes(133, 803, 'z', 'x')
    + `<g transform="translate(400 460) scale(.3333)">${path(rad, '#0c0e10', 3, 'opacity=".82"')}${path(arcs, '#101214', 3, 'opacity=".78"')}
      ${path(outer, '#000', 5)}
      <path d="M925 752Q1000 750 1035 805Q1055 840 1050 870Q990 870 950 825Q930 790 925 752z" fill="#9da3aa"/>
      ${path('M925 752Q1000 750 1035 805Q1055 840 1050 870', '#000', 5)}
      <path d="${sliver}" fill="url(#mesh)"/>${path(sliver, '#000', 3)}${path('M928 690Q922 740 945 810Q970 855 1020 868H1110', '#000', 7)}
      <path d="M1050 890Q1040 960 980 1030Q930 1085 845 1139H1000Q1080 1080 1110 1000V890z" fill="url(#mesh2)" opacity=".5"/>
      ${path('M1050 890Q1040 960 980 1030Q930 1085 845 1139M1062 895Q1045 975 990 1038Q940 1090 865 1139', '#000', 4)}
      ${path('M1110 870V1150M1078 895V1150M1030 960V1150M960 1060V1150', '#111', 3)}
      ${path('M345 25L250 265Q215 350 165 500T100 715', '#000', 3, 'stroke-dasharray="5 3"')}
      ${path('M595 25V1150', '#2c682f', 5)}</g>`);
}

function rightView() {
  const mir = f => f(1) + f(-1);
  let g = '';
  for (let k = 0; k < 9; k++) { const y = 308 + 24 * k; g += line(92 + Math.max(0, k - 3) * 13, y, 380 - Math.max(0, k - 3) * 13, y); }
  g += mir(d => { let s = ''; [136, 124, 109, 92, 72, 50].forEach(w => { s += `M${236 + d * w} 288C${236 + d * w} 400 ${236 + d * w * .9} 430 ${236 + d * (w * .25 + 36)} 500`; }); return s; });
  let c = '';
  for (let k = 1; k < 8; k++) { c += ell(236, 170, 95 * Math.cos(k * .2), 92) + ell(236, 170, 95, 92 * Math.cos(k * .2)); }
  const dense = 'M236 76C130 85 100 200 92 288H380C372 200 340 85 236 76z';
  const stem = 'M190 285Q210 330 208 370Q205 420 168 500H304Q267 420 264 370Q262 330 282 285z';
  put('view-right', grid(855, 468, 1612, 844, 1238.7, 725.3, 7.92) + path('M1238.700 468V725', '#2f7a34', 2) + path('M1239 725.300H1612', '#984b50', 2) + axes(892, 803, 'z', 'y')
    + `<g transform="translate(1160 550) scale(.3333)">${path(g, '#0c0e10', 3, 'opacity=".8"')}<path d="${dense}" fill="url(#mesh)"/>
      <path d="${stem}" fill="url(#mesh)"/><path d="${stem}" opacity=".35"/>${path(stem, '#000', 9)}
      <circle cx="236" cy="170" r="95" fill="#9da3aa"/>${path(c, '#111', 3, 'opacity=".85"')}
      <path fill-rule="evenodd" d="${ell(236, 174, 101, 100)}z${ell(236, 168, 90, 88)}z"/><path d="M92 268Q150 284 180 250Q236 290 292 250Q320 284 380 268V288H92z" opacity=".9"/>
      ${path('M236 76C130 76 88 230 89 320C90 400 125 460 165 502H307C350 460 383 400 384 320C384 230 342 76 236 76z', '#000', 5)}
      ${path('M236 76V502', '#000', 5)}</g>`);
}
topView();
perspView();
frontView();
rightView();
```
